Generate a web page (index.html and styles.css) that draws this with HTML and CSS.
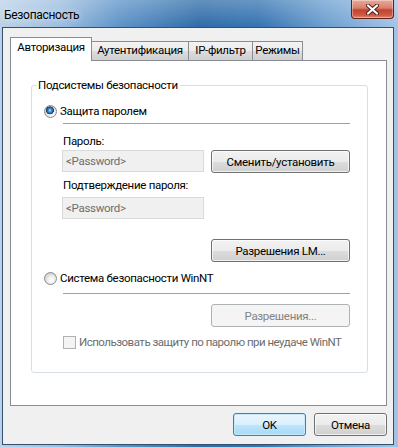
FILE: index.html
```html
<!DOCTYPE html>
<html lang="ru">
<head>
    <meta charset="UTF-8">
    <title>Безопасность</title>
    <link rel="stylesheet" href="styles.css">
</head>
<body>

<div class="window">
    <div class="titlebar">
        <span class="title">Безопасность</span>
        <div class="close-btn">
            <svg width="13" height="11" viewBox="0 0 13 11">
                <path d="M2 1.5 L11 9.5 M11 1.5 L2 9.5" stroke="#4a1d17" stroke-width="4" stroke-linecap="round"/>
                <path d="M2 1.5 L11 9.5 M11 1.5 L2 9.5" stroke="#fff" stroke-width="2.2" stroke-linecap="round"/>
            </svg>
        </div>
    </div>

    <div class="client">
        <div class="tabs">
            <div class="tab active tab-auth">Авторизация</div>
            <div class="tab tab-ident">Аутентификация</div>
            <div class="tab tab-ip">IP-фильтр</div>
            <div class="tab tab-mode">Режимы</div>
        </div>

        <div class="panel">
            <div class="group">
                <span class="legend">Подсистемы безопасности</span>

                <div class="radio-row first">
                    <span class="radio checked"></span>Защита паролем
                </div>
                <div class="column">
                    <div class="sep sep-first"></div>
                    <div class="field-label label-first">Пароль:</div>
                    <div class="field-row">
                        <input class="textbox" type="text" value="<Password>" disabled>
                        <button class="btn">Сменить/установить</button>
                    </div>
                    <div class="field-label label-second">Подтверждение пароля:</div>
                    <input class="textbox textbox-second" type="text" value="<Password>" disabled>
                    <div class="btn-row lm-row">
                        <button class="btn">Разрешения LM...</button>
                    </div>
                </div>

                <div class="radio-row second">
                    <span class="radio"></span>Система безопасности WinNT
                </div>
                <div class="column">
                    <div class="sep sep-second"></div>
                    <div class="btn-row perm-row">
                        <button class="btn" disabled>Разрешения...</button>
                    </div>
                    <div class="check-row">
                        <span class="checkbox"></span>Использовать защиту по паролю при неудаче WinNT
                    </div>
                </div>
            </div>
        </div>

        <div class="footer">
            <button class="btn default">OK</button>
            <button class="btn">Отмена</button>
        </div>
    </div>
</div>

</body>
</html>
```

FILE: styles.css
```css
* { box-sizing: border-box; }
body { margin: 0; font-family: Roboto, "Liberation Sans", sans-serif; font-size: 11.5px; letter-spacing: -0.3px; color: #000; }

/* window frame */
.window {
    width: 398px; height: 447px; display: flex; flex-direction: column;
    background:
        linear-gradient(180deg, rgba(255, 255, 255, 0.25), rgba(255, 255, 255, 0) 27px),
        linear-gradient(90deg, #bcd2e8 0%, #9cbddf 15%, #5d93c8 30%, #2f6ca8 50%, #3574b1 65%, #6c9fd0 82%, #a4c4e4 100%);
}
.titlebar { height: 27px; display: flex; justify-content: space-between; align-items: flex-start; }
.title { margin: 8px 0 0 4px; line-height: 15px; font-size: 12px; color: #000; text-shadow: 0 0 6px rgba(255, 255, 255, 0.8); }
.close-btn {
    width: 43px; height: 19px; margin-right: 4px;
    display: flex; align-items: center; justify-content: center;
    border: 1px solid #5b211a; border-top: 0; border-radius: 0 0 4px 4px;
    background: linear-gradient(180deg, #e9a99b 0%, #d7806d 45%, #c3412f 55%, #cf5a43 85%, #e38b6d 100%);
    box-shadow: inset 0 0 0 1px rgba(255, 255, 255, 0.35);
}

.client {
    flex: 1; margin: 0 4px 2px 2px; padding: 9px 6px 0 7px;
    background: #f0f0f0; border: 1px solid #34506e;
}

/* tabs */
.tabs { display: flex; align-items: flex-end; height: 23px; }
.tab {
    height: 19px; padding-top: 1px; line-height: 15px; text-align: center; white-space: nowrap;
    border: 1px solid #898c95; border-bottom: 0; border-left-width: 0;
    background: linear-gradient(180deg, #f3f3f3 0%, #ebebeb 50%, #dddddd 50%, #cfcfcf 100%);
}
.tab.active {
    height: 24px; margin-bottom: -1px; padding-top: 2px; position: relative; z-index: 1;
    background: #fff; border-left-width: 1px;
}
.tab-auth { width: 82px; }
.tab-ident { width: 97px; }
.tab-ip { width: 64px; }
.tab-mode { width: 50px; }

.panel { height: 346px; background: #fff; border: 1px solid #898c95; padding: 24px 18px 0 20px; }

/* group box */
.group { position: relative; border: 1px solid #d5dfe5; border-radius: 3px; padding-bottom: 22px; }
.legend { position: absolute; top: -8px; left: 4px; padding: 0 2px; line-height: 15px; background: #fff; }

.radio-row { display: flex; align-items: center; line-height: 15px; padding-left: 12px; }
.radio-row.first { margin-top: 18px; }
.radio-row.second { margin-top: 9px; }
.radio {
    flex: none; width: 13px; height: 13px; margin-right: 3px; border-radius: 50%;
    border: 1px solid #8a8a8a;
    background: radial-gradient(circle at 60% 65%, #ffffff 0, #f4f4f4 3px, #d2d2d2 7px);
}
.radio.checked {
    background:
        radial-gradient(circle at 45% 40%, #b8e8ff 0, #4a9ad8 1.5px, #1c5a9c 3px, #123f73 3.8px, transparent 4.2px),
        radial-gradient(circle at 60% 65%, #ffffff 0, #f4f4f4 3px, #d2d2d2 7px);
}

.column { margin: 0 17px 0 30px; }
.sep { height: 1px; margin-left: 1px; background: #a0a0a0; }
.sep-first { margin-top: 4px; }
.sep-second { margin-top: 7px; }

.field-label { line-height: 15px; padding-left: 1px; }
.label-first { margin-top: 10px; }
.label-second { margin-top: 5px; }

.field-row { display: flex; justify-content: space-between; align-items: flex-start; margin-top: 1px; }
.textbox {
    display: block; width: 142px; height: 22px; padding: 0 3px; margin: 0;
    font-family: inherit; font-size: inherit; letter-spacing: inherit; color: #6d6d6d;
    background: #f0f0f0; border: 1px solid #dadada;
}
.textbox-second { margin-top: 4px; }

.btn-row { display: flex; justify-content: flex-end; }
.lm-row { margin-top: 20px; }
.perm-row { margin-top: 10px; }

/* buttons */
.btn {
    width: 139px; height: 23px; padding: 0; margin: 0;
    font-family: inherit; font-size: inherit; letter-spacing: inherit; color: #000;
    border: 1px solid #707070; border-radius: 3px;
    background: linear-gradient(180deg, #f2f2f2 0%, #ebebeb 50%, #dddddd 50%, #cfcfcf 100%);
    box-shadow: inset 0 0 0 1px rgba(255, 255, 255, 0.7);
}
.btn:disabled { color: #838383; border-color: #adb2b5; background: #f4f4f4; box-shadow: none; }
.btn.default {
    border-color: #3c7fb1;
    background: linear-gradient(180deg, #eaf6fd 0%, #d9f0fc 50%, #bee6fd 50%, #a7d9f5 100%);
    box-shadow: inset 0 0 0 1px #c6eafd;
}

.check-row {
    display: flex; align-items: center; line-height: 15px; margin-top: 8px; margin-left: 1px;
    color: #6d6d6d; white-space: nowrap; letter-spacing: -0.5px;
}
.checkbox { flex: none; width: 13px; height: 13px; margin-right: 3px; border: 1px solid #b1b1b1; background: #f4f4f4; }

.footer { display: flex; justify-content: flex-end; gap: 8px; margin-top: 7px; }
.footer .btn { width: 73px; }
```
